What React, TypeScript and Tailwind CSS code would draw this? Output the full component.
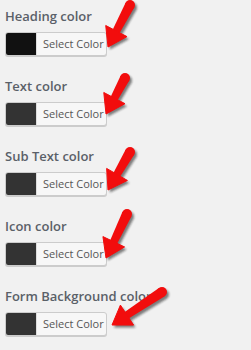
const rows = [
  { label: "Heading color", swatch: "bg-[#111111]" },
  { label: "Text color", swatch: "bg-[#333333]" },
  { label: "Sub Text color", swatch: "bg-[#333333]" },
  { label: "Icon color", swatch: "bg-[#333333]" },
  { label: "Form Background color", swatch: "bg-[#333333]" },
];

// tail -> tip, in page pixels
const arrows = [
  { tail: [130, 5], tip: [108, 47] },
  { tail: [125, 78], tip: [106, 114] },
  { tail: [130, 152], tip: [108, 190] },
  { tail: [127, 214], tip: [106, 258] },
  { tail: [162, 292], tip: [112, 325] },
];

const arrowShapes = (tail: number[], tip: number[]) => {
  const dx = tip[0] - tail[0];
  const dy = tip[1] - tail[1];
  const len = Math.hypot(dx, dy);
  const ux = dx / len;
  const uy = dy / len;
  const px = -uy;
  const py = ux;
  const headLen = 18;
  const headHalf = 12;
  const bx = tip[0] - ux * headLen;
  const by = tip[1] - uy * headLen;
  const tw = 5;
  const bw = 3.8;
  const shaft = [
    [tail[0] + px * tw, tail[1] + py * tw],
    [bx + px * bw + ux * 2, by + py * bw + uy * 2],
    [bx - px * bw + ux * 2, by - py * bw + uy * 2],
    [tail[0] - px * tw, tail[1] - py * tw],
  ];
  const head = [
    [bx + px * headHalf, by + py * headHalf],
    [tip[0], tip[1]],
    [bx - px * headHalf, by - py * headHalf],
  ];
  const pts = (a: number[][]) => a.map((p) => p.join(",")).join(" ");
  return { shaft: pts(shaft), head: pts(head), tw };
};

const Arrow = ({ tail, tip }: { tail: number[]; tip: number[] }) => {
  const s = arrowShapes(tail, tip);
  return (
    <g>
      <g transform="translate(2 2.5)" fill="#1a1a1a" opacity="0.55" filter="url(#blur)">
        <polygon points={s.shaft} />
        <circle cx={tail[0]} cy={tail[1]} r={s.tw} />
        <polygon points={s.head} strokeLinejoin="round" />
      </g>
      <g fill="#f20d0d">
        <polygon points={s.shaft} />
        <circle cx={tail[0]} cy={tail[1]} r={s.tw} />
        <polygon points={s.head} stroke="#f20d0d" strokeWidth="1" strokeLinejoin="round" />
      </g>
    </g>
  );
};

const App = () => {
  return (
    <div className="relative w-[251px] h-[350px] overflow-hidden bg-[#f1f1f1] font-['Open_Sans',sans-serif]">
      <div className="flex flex-col pl-[5px]">
        {rows.map((row) => (
          <div key={row.label} className="flex flex-col h-[70px] pt-[6px]">
            <div className="h-[20px] leading-[20px] text-[13px] font-semibold text-[#5a6068] whitespace-nowrap">
              {row.label}
            </div>
            <div className="mt-[6px] flex h-[24px] w-[102px] rounded-[3px] border border-[#cccccc] bg-[#f7f7f7] overflow-hidden shadow-[0_1px_0_#cccccc]">
              <div className={`w-[30px] h-full ${row.swatch}`} />
              <div className="flex-1 flex items-center pl-[6px] text-[11px] text-[#555555] border-l border-[#dddddd]">
                Select Color
              </div>
            </div>
          </div>
        ))}
      </div>

      <svg className="absolute inset-0 pointer-events-none" width="251" height="350" viewBox="0 0 251 350">
        <defs>
          <filter id="blur" x="-20%" y="-20%" width="140%" height="140%">
            <feGaussianBlur stdDeviation="1.2" />
          </filter>
        </defs>
        {arrows.map((a, i) => (
          <Arrow key={i} tail={a.tail} tip={a.tip} />
        ))}
      </svg>
    </div>
  );
};

export default App;
